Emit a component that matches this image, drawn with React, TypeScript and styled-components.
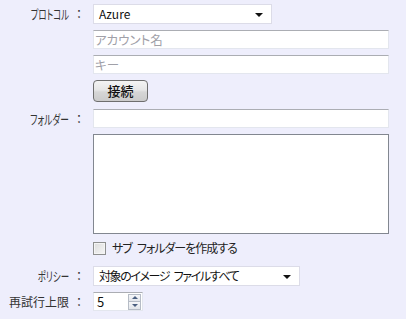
import React from "react";
import styled, { createGlobalStyle } from "styled-components";

const Global = createGlobalStyle`
  html, body { margin: 0; padding: 0; background: #eeeefc; }
  body {
    font-family: "Noto Sans CJK JP", "Noto Sans", sans-serif;
    font-size: 12px;
    color: #222;
    font-feature-settings: "palt";
  }
  input, textarea, button { font-feature-settings: "palt"; }
`;

const Page = styled.div`
  width: 406px;
  height: 319px;
  background: #eeeefc;
  padding-top: 4px;
  box-sizing: border-box;
  display: flex;
  flex-direction: column;
`;

const Row = styled.div<{ $mt?: number }>`
  display: grid;
  grid-template-columns: 85px auto;
  column-gap: 8px;
  align-items: center;
  margin-top: ${(p) => p.$mt ?? 0}px;
`;

const Label = styled.label`
  display: flex;
  justify-content: flex-end;
  align-items: center;
  font-size: 12px;
  color: #333;
  white-space: nowrap;
  line-height: 16px;
`;

const LabelText = styled.span<{ $sx?: number; $fs?: number }>`
  display: inline-block;
  font-size: ${(p) => p.$fs ?? 12}px;
  transform: scaleX(${(p) => p.$sx ?? 1});
  transform-origin: right center;
`;

const Colon = styled.span`
  width: 16px;
  text-align: right;
  font-feature-settings: normal;
`;

const Field = styled.div`
  display: flex;
  align-items: center;
`;

const TextBox = styled.input<{ $w: number; $h: number }>`
  box-sizing: border-box;
  width: ${(p) => p.$w}px;
  height: ${(p) => p.$h}px;
  border: 1px solid #e3e6ee;
  border-top-color: #abadb3;
  background: #fff;
  padding: 0 1px;
  font-family: "Noto Sans CJK JP", sans-serif;
  font-size: 12.5px;
  outline: none;
  &::placeholder { color: #a0a0a8; }
`;

const Select = styled.div<{ $w: number }>`
  box-sizing: border-box;
  width: ${(p) => p.$w}px;
  height: 20px;
  background: #fff;
  border: 1px solid #dcdce8;
  display: flex;
  align-items: center;
  justify-content: space-between;
  padding: 0 8px 0 5px;
  font-size: 12px;
  color: #111;
`;

const SelectText = styled.span<{ $ls?: number }>`
  line-height: 18px;
  white-space: nowrap;
  letter-spacing: ${(p) => p.$ls ?? 0}px;
`;

const Arrow = styled.span`
  width: 0;
  height: 0;
  border-left: 4px solid transparent;
  border-right: 4px solid transparent;
  border-top: 4px solid #111;
  margin-top: 1px;
`;

const Button = styled.button`
  box-sizing: border-box;
  width: 55px;
  height: 22px;
  border: 1px solid #6e6e6e;
  border-radius: 4px;
  background: linear-gradient(#f4f4f4 0%, #e6e6e6 45%, #d6d6d6 55%, #cbcbcb 100%);
  font-family: "Noto Sans CJK JP", sans-serif;
  font-size: 13px;
  font-weight: 500;
  color: #111;
  padding: 0;
  line-height: 18px;
`;

const TextArea = styled.textarea`
  box-sizing: border-box;
  width: 296px;
  height: 100px;
  border: 1px solid #828790;
  background: #fff;
  resize: none;
  outline: none;
  display: block;
`;

const CheckRow = styled.label`
  display: flex;
  align-items: center;
  gap: 6px;
  font-size: 12px;
  color: #222;
  line-height: 16px;
  letter-spacing: -1px;
`;

const Box = styled.span`
  box-sizing: border-box;
  width: 13px;
  height: 13px;
  border: 1px solid #8e8f8f;
  background: linear-gradient(135deg, #dcdcdc, #f6f6f6);
  box-shadow: inset 0 0 0 1px #f4f4f4;
`;

const Spin = styled.div`
  box-sizing: border-box;
  width: 50px;
  height: 19px;
  background: #fff;
  border: 1px solid #e3e6ee;
  border-top-color: #abadb3;
  display: flex;
  align-items: center;
  justify-content: space-between;
  padding-left: 3px;
  font-size: 13px;
  color: #111;
`;

const SpinButtons = styled.div`
  display: flex;
  flex-direction: column;
  width: 13px;
  height: 16px;
  margin-right: 1px;
`;

const SpinBtn = styled.div`
  flex: 1;
  border: 1px solid #b6bcc6;
  background: linear-gradient(#f6f7f9, #e2e5ea);
  display: flex;
  align-items: center;
  justify-content: center;
  & + & { border-top: none; }
`;

const Tri = styled.span<{ $up?: boolean }>`
  width: 0;
  height: 0;
  border-left: 3px solid transparent;
  border-right: 3px solid transparent;
  ${(p) => (p.$up ? "border-bottom: 3px solid #4a5f80;" : "border-top: 3px solid #4a5f80;")}
`;

export default function App() {
  return (
    <>
      <Global />
      <Page>
        <Row>
          <Label>
            <LabelText $fs={13} $sx={0.65}>プロトコル</LabelText>
            <Colon>：</Colon>
          </Label>
          <Field>
            <Select $w={179}>
              <SelectText>Azure</SelectText>
              <Arrow />
            </Select>
          </Field>
        </Row>
        <Row $mt={6}>
          <span />
          <Field>
            <TextBox $w={296} $h={19} placeholder="アカウント名" />
          </Field>
        </Row>
        <Row $mt={6}>
          <span />
          <Field>
            <TextBox $w={296} $h={19} placeholder="キー" />
          </Field>
        </Row>
        <Row $mt={6}>
          <span />
          <Field>
            <Button>接続</Button>
          </Field>
        </Row>
        <Row $mt={7}>
          <Label>
            <LabelText $fs={13} $sx={0.67}>フォルダー</LabelText>
            <Colon>：</Colon>
          </Label>
          <Field>
            <TextBox $w={296} $h={19} />
          </Field>
        </Row>
        <Row $mt={6}>
          <span />
          <Field>
            <TextArea />
          </Field>
        </Row>
        <Row $mt={6}>
          <span />
          <CheckRow>
            <Box />
            {"サブ\u2002フォルダーを作成する"}
          </CheckRow>
        </Row>
        <Row $mt={10}>
          <Label>
            <LabelText $fs={13} $sx={0.65}>ポリシー</LabelText>
            <Colon>：</Colon>
          </Label>
          <Field>
            <Select $w={207}>
              <SelectText $ls={-1.4}>{"対象のイメージ\u2002ファイルすべて"}</SelectText>
              <Arrow />
            </Select>
          </Field>
        </Row>
        <Row $mt={6}>
          <Label>
            <LabelText>再試行上限</LabelText>
            <Colon>：</Colon>
          </Label>
          <Field>
            <Spin>
              <span>5</span>
              <SpinButtons>
                <SpinBtn><Tri $up /></SpinBtn>
                <SpinBtn><Tri /></SpinBtn>
              </SpinButtons>
            </Spin>
          </Field>
        </Row>
      </Page>
    </>
  );
}
